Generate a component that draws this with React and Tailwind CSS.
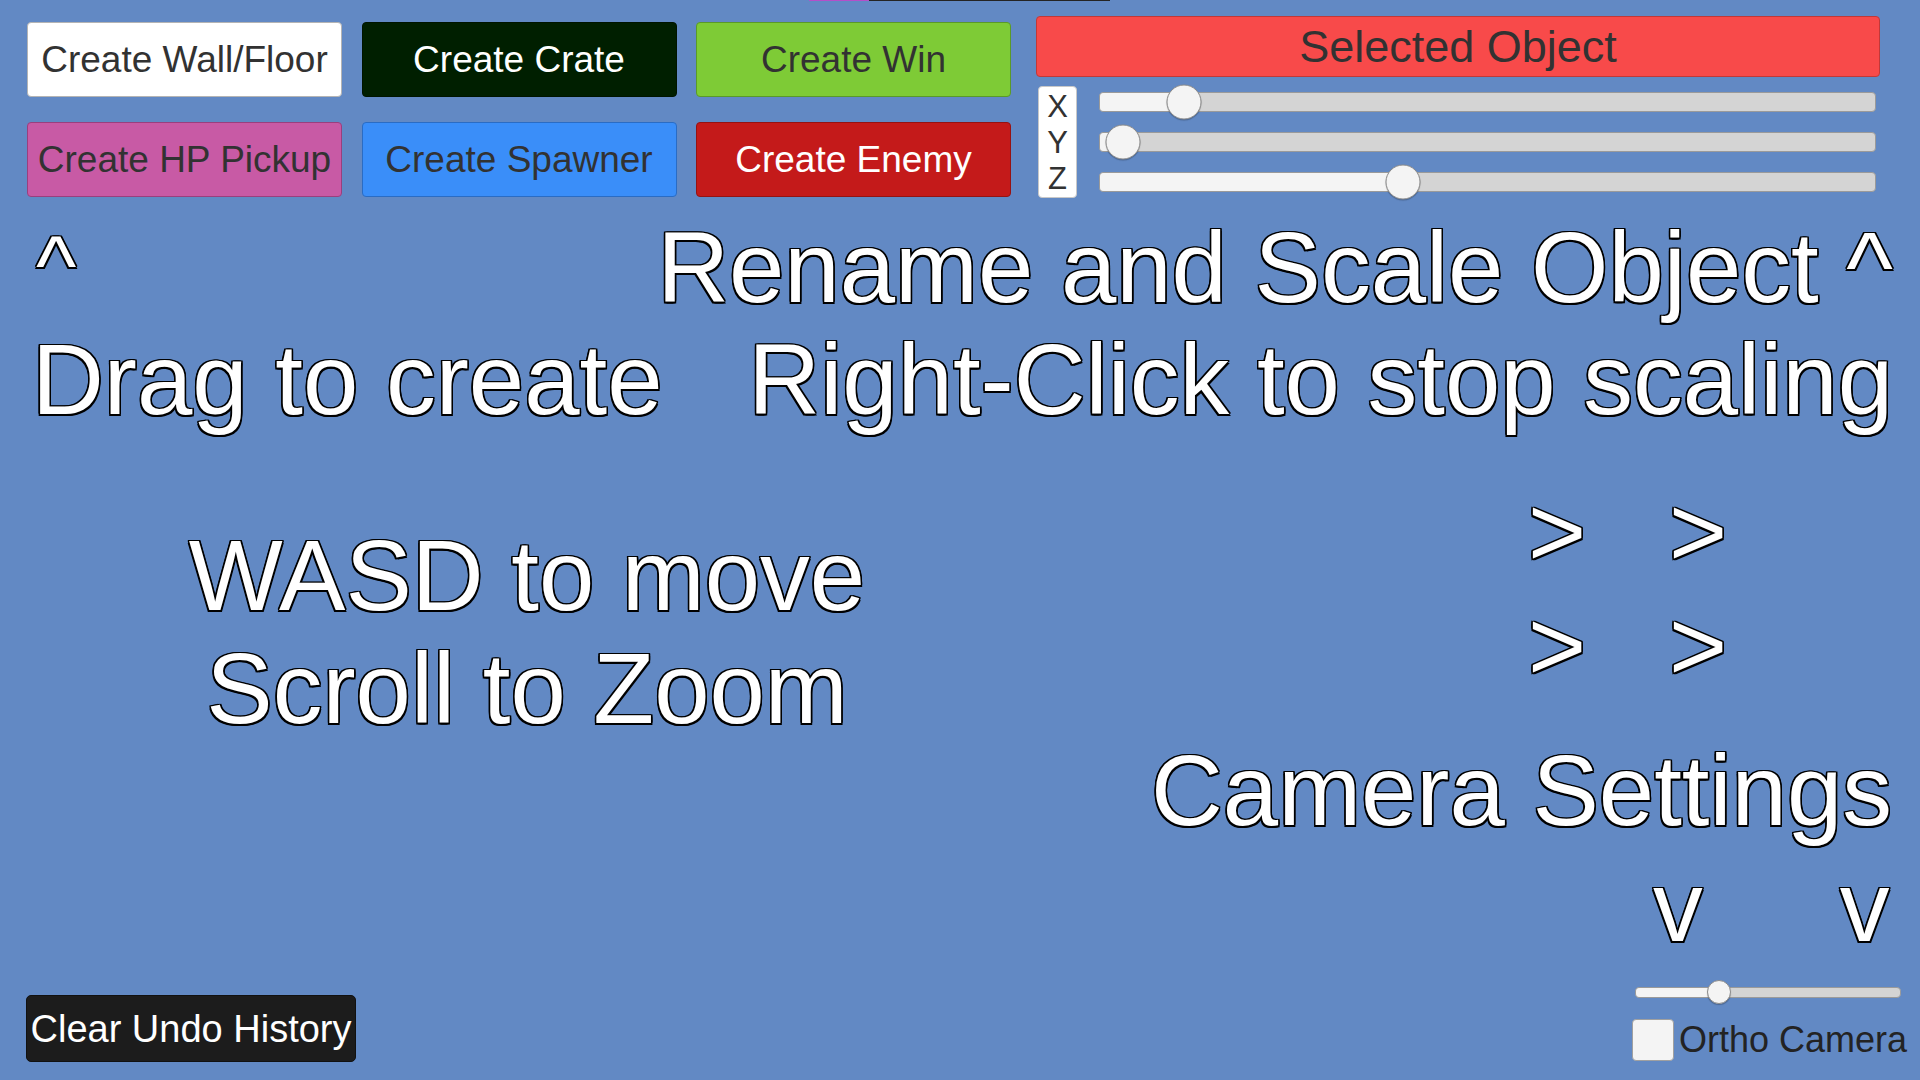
import React from 'react';

const outline =
    "text-white [text-shadow:-1.5px_-1.5px_0_#000,0_-1.5px_0_#000,1.5px_-1.5px_0_#000,1.5px_0_0_#000,1.5px_1.5px_0_#000,0_1.5px_0_#000,-1.5px_1.5px_0_#000,-1.5px_0_0_#000]";

const buttons = [
    { label: 'Create Wall/Floor', cls: 'bg-white border-[#b4b4b4] text-[#323232]' },
    { label: 'Create Crate', cls: 'bg-[#001f00] border-[#001400] text-white' },
    { label: 'Create Win', cls: 'bg-[#7ecb36] border-[#5a9a28] text-[#323232]' },
    { label: 'Create HP Pickup', cls: 'bg-[#c85aa5] border-[#9a3f7e] text-[#323232]' },
    { label: 'Create Spawner', cls: 'bg-[#3a8ef9] border-[#2a6cc4] text-[#323232]' },
    { label: 'Create Enemy', cls: 'bg-[#c41a1a] border-[#961212] text-white' },
];

const Slider = ({ pos, track = 'h-[20px]', thumb = 'w-[35px] h-[35px]' }) => (
    <div className={`relative ${track} rounded-[4px] border border-[#9a9a9a] bg-[#d4d4d4]`}>
        <div className="h-full rounded-l-[4px] bg-[#f4f4f4]" style={{ width: pos }} />
        <div
            className={`absolute top-1/2 -translate-x-1/2 -translate-y-1/2 ${thumb} rounded-full border border-[#8c8c8c] bg-[#f4f4f4] shadow-[0_1px_1px_rgba(0,0,0,0.25)]`}
            style={{ left: pos }}
        />
    </div>
);

const App = () => {
    return (
        <div className="w-[1920px] h-[1080px] overflow-hidden bg-[#6289c4] font-['Liberation_Sans',Arial,sans-serif] flex flex-col">
            {/* loading strip */}
            <div className="flex ml-[809px] h-[1px]">
                <div className="w-[60px] bg-[#b54fc9]" />
                <div className="w-[241px] bg-[#242424]" />
            </div>

            {/* Top controls */}
            <div className="flex items-start pl-[27px] mt-[15px]">
                <div className="mt-[6px] grid grid-cols-[315px_315px_315px] gap-x-[19.5px] gap-y-[25px]">
                    {buttons.map(b => (
                        <div
                            key={b.label}
                            className={`h-[75px] flex items-center justify-center rounded-[4px] border whitespace-nowrap text-[37px] leading-none ${b.cls}`}
                        >
                            {b.label}
                        </div>
                    ))}
                </div>

                <div className="ml-[25px] w-[844px]">
                    <div className="h-[61px] rounded-[4px] border border-[#c23838] bg-[#f84a4a] flex items-center justify-center text-[45px] leading-none text-[#323232]">
                        Selected Object
                    </div>
                    <div className="flex mt-[9px]">
                        <div className="ml-[2px] w-[39px] h-[112px] rounded-[4px] border border-[#c8c8c8] bg-white pt-[2px] flex flex-col items-center text-[31px] leading-[36px] text-[#323232]">
                            <span>X</span>
                            <span>Y</span>
                            <span>Z</span>
                        </div>
                        <div className="ml-[22px] w-[777px] pt-[6px] flex flex-col gap-[20px]">
                            <Slider pos={84} />
                            <Slider pos={23} />
                            <Slider pos={303} />
                        </div>
                    </div>
                </div>
            </div>

            {/* Rename / drag rows */}
            <div className={`mt-[20px] flex justify-between pl-[36px] pr-[27px] text-[99.5px] leading-[100px] whitespace-pre ${outline}`}>
                <span className="text-[86px] mt-[-3px]">^</span>
                <span>Rename and Scale Object ^</span>
            </div>
            <div className={`mt-[12px] flex justify-between pl-[32px] pr-[27px] text-[99.5px] leading-[100px] whitespace-pre ${outline}`}>
                <span>Drag to create</span>
                <span>Right-Click to stop scaling</span>
            </div>

            {/* Middle */}
            <div className={`flex h-[311px] items-start text-[99.5px] whitespace-pre ${outline}`}>
                <div className="w-[1054px] pt-[89px] flex flex-col items-center leading-[113px]">
                    <span>WASD to move</span>
                    <span>Scroll to Zoom</span>
                </div>
                <div className="ml-[474px] pt-[45px] grid grid-cols-[58px_58px] gap-x-[83px] leading-[114px]">
                    <span>&gt;</span>
                    <span>&gt;</span>
                    <span>&gt;</span>
                    <span>&gt;</span>
                </div>
            </div>

            <div className={`text-right pr-[28px] text-[99.5px] leading-[100px] whitespace-pre ${outline}`}>
                Camera Settings
            </div>

            <div className={`mt-[16px] flex text-[99.5px] leading-[100px] ${outline}`}>
                <span className="ml-[1653px]">v</span>
                <span className="ml-[137px]">v</span>
            </div>

            {/* Bottom */}
            <div className="mt-auto flex items-end justify-between pl-[26px] pr-[13px] pb-[18px]">
                <div className="w-[330px] h-[67px] rounded-[5px] bg-[#1c1c1c] border border-[#111] flex items-center justify-center text-white text-[38px] leading-none whitespace-nowrap">
                    Clear Undo History
                </div>
                <div className="w-[275px] mb-[1px] flex flex-col">
                    <div className="ml-[3px] w-[266px] h-[24px] flex flex-col justify-center">
                        <Slider pos={83} track="h-[11px]" thumb="w-[24px] h-[24px]" />
                    </div>
                    <div className="mt-[15px] flex items-center gap-[5px]">
                        <div className="w-[42px] h-[42px] rounded-[4px] border border-[#a0a0a0] bg-[#f4f4f4]" />
                        <span className="text-[36px] leading-[42px] text-[#232323] whitespace-nowrap">Ortho Camera</span>
                    </div>
                </div>
            </div>
        </div>
    );
};

export default App;
